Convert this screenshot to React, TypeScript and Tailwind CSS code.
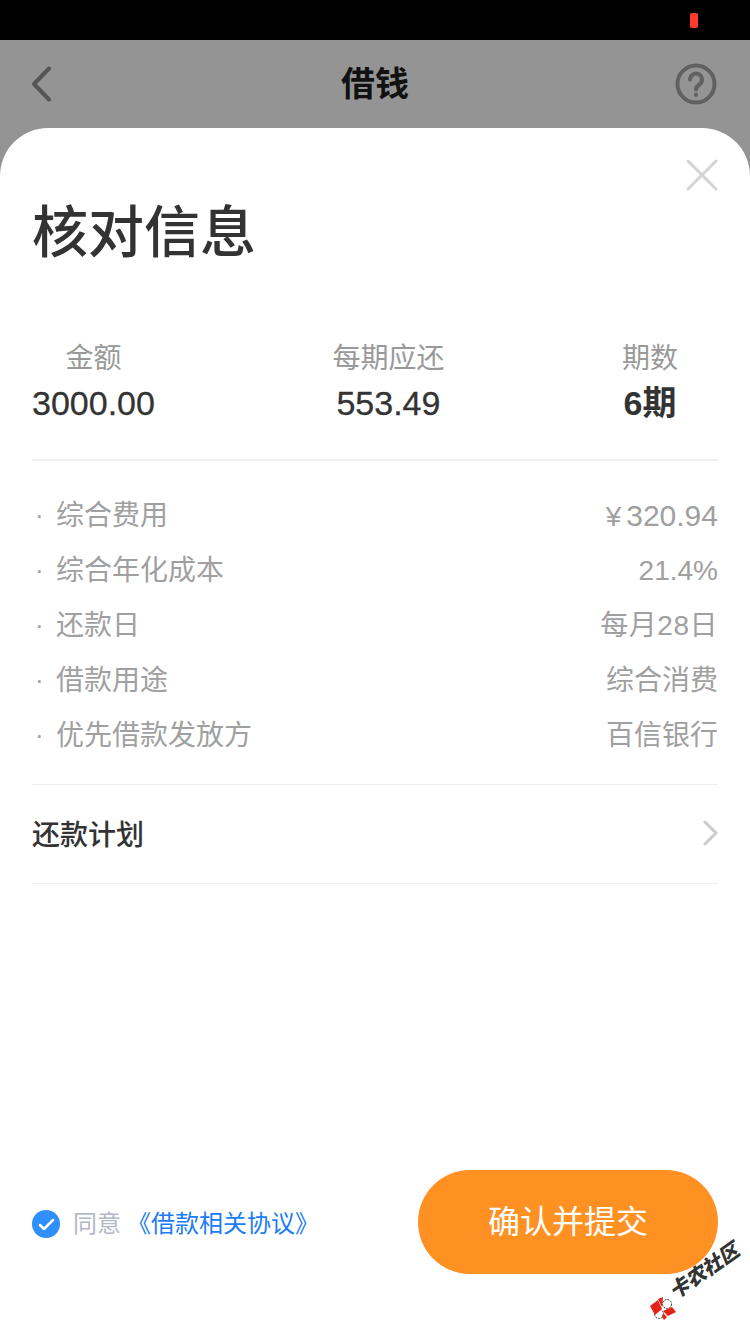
import type { ReactNode } from "react";

const details: { label: string; value: ReactNode }[] = [
  {
    label: "综合费用",
    value: (
      <>
        <span className="mr-[5px]">¥</span>
        <span className="text-[30px]">320.94</span>
      </>
    ),
  },
  { label: "综合年化成本", value: "21.4%" },
  { label: "还款日", value: <span className="tracking-[0.5px]">每月28日</span> },
  { label: "借款用途", value: "综合消费" },
  { label: "优先借款发放方", value: "百信银行" },
];

function Summary({ label, value, bold }: { label: string; value: string; bold?: boolean }) {
  return (
    <div className="flex flex-col items-center">
      <div className="h-[40px] text-[28px] leading-[40px] text-[#999]">{label}</div>
      <div
        className={`h-[48px] text-[34px] leading-[48px] text-[#333] ${
          bold ? "font-bold" : "[-webkit-text-stroke:0.3px_#333]"
        }`}
      >
        {value}
      </div>
    </div>
  );
}

function Watermark() {
  return (
    <>
      <svg className="pointer-events-none absolute left-[645px] top-[1285px]" width="36" height="36" viewBox="0 0 36 36">
        <circle cx="22" cy="19" r="4.5" fill="#fff" stroke="#333" strokeWidth="1" strokeDasharray="2 1" />
        <circle cx="14" cy="29" r="4.5" fill="#fff" stroke="#333" strokeWidth="1" strokeDasharray="2 1" />
        <path d="M5 21L13 15L17 24L10 30Z M13 14L18 12L17 22Z M18 26L27 22L31 27L23 31Z M18 28L22 32L19 35L17 32Z" fill="#e2231a" />
      </svg>
      <span className="pointer-events-none absolute left-[664px] top-[1259px] -rotate-[35deg] whitespace-nowrap text-[20px] font-black italic leading-[24px] text-[#333]">
        卡农社区
      </span>
    </>
  );
}

export default function App() {
  return (
    <div className="relative flex h-[1334px] w-[750px] flex-col overflow-hidden bg-[#949494] font-['Liberation_Sans','Noto_Sans_CJK_SC',sans-serif]">
      <div className="flex h-[40px] shrink-0 items-center justify-end bg-black pr-[52px]">
        <div className="h-[15px] w-[8px] rounded-[2px] bg-[#ff3b30]" />
      </div>

      <header className="flex h-[88px] shrink-0 items-center justify-between pl-[31px] pr-[33px]">
        <svg width="44" height="42" viewBox="0 0 44 42" fill="none" stroke="#555" strokeWidth="4" strokeLinecap="round" strokeLinejoin="round">
          <path d="M18 5.5L3 21L18 36.5" />
        </svg>
        <h1 className="text-[34px] font-bold text-[#111]">借钱</h1>
        <svg width="42" height="42" viewBox="0 0 42 42" fill="none" stroke="#616161" strokeWidth="4" strokeLinecap="round">
          <circle cx="21" cy="21" r="18.5" />
          <path d="M15 16.5a6 6 0 1 1 9.5 5c-2.2 1.5-3.5 2.6-3.5 5" />
          <path d="M21 31.5v.5" />
        </svg>
      </header>

      <main className="flex min-h-0 flex-1 flex-col rounded-t-[48px] bg-white">
        <div className="flex justify-end pr-[32px] pt-[31px]">
          <svg width="32" height="32" viewBox="0 0 32 32" stroke="#d4d4d4" strokeWidth="3" strokeLinecap="round">
            <path d="M2 2L30 30M30 2L2 30" />
          </svg>
        </div>

        <h2 className="ml-[32px] mt-[2px] text-[56px] font-medium leading-[80px] text-[#333]">核对信息</h2>

        <div className="mt-[66px] flex justify-between pl-[32px] pr-[72px]">
          <Summary label="金额" value="3000.00" />
          <Summary label="每期应还" value="553.49" />
          <Summary label="期数" value="6期" bold />
        </div>

        <div className="mx-[32px] mt-[32px] h-[2px] bg-[#eee]" />

        <ul className="mx-[32px] mt-[27px] flex flex-col">
          {details.map((row) => (
            <li key={row.label} className="flex h-[55px] items-center justify-between text-[28px] text-[#a0a0a0]">
              <span className="flex items-center">
                <span className="w-[24px] pl-[3px] text-[26px]">·</span>
                {row.label}
              </span>
              <span>{row.value}</span>
            </li>
          ))}
        </ul>

        <div className="mx-[32px] mt-[21px] h-px bg-[#eee]" />
        <div className="mx-[32px] flex h-[98px] items-center justify-between pt-[3px]">
          <span className="text-[28px] font-medium text-[#333]">还款计划</span>
          <svg width="16" height="26" viewBox="0 0 16 26" fill="none" stroke="#ccc" strokeWidth="3" strokeLinecap="round" strokeLinejoin="round" className="-mr-px -mt-[5px]">
            <path d="M2 2L13 13L2 24" />
          </svg>
        </div>
        <div className="mx-[32px] h-px bg-[#eee]" />

        <div className="mx-[32px] mb-[60px] mt-auto flex items-center justify-between">
          <div className="flex items-center pt-[3px]">
            <svg width="28" height="28" viewBox="0 0 28 28">
              <circle cx="14" cy="14" r="14" fill="#2f8ffb" />
              <path d="M8 15L12 19L21 10" fill="none" stroke="#fff" strokeWidth="2.5" strokeLinecap="round" strokeLinejoin="round" />
            </svg>
            <span className="ml-[13px] text-[24px] text-[#b4b8c4]">同意</span>
            <span className="ml-[6px] text-[24px] text-[#1b7cf5]">《借款相关协议》</span>
          </div>
          <button className="h-[104px] w-[300px] rounded-[52px] bg-[#ff9022] text-[32px] text-white">确认并提交</button>
        </div>
      </main>

      <Watermark />
    </div>
  );
}
